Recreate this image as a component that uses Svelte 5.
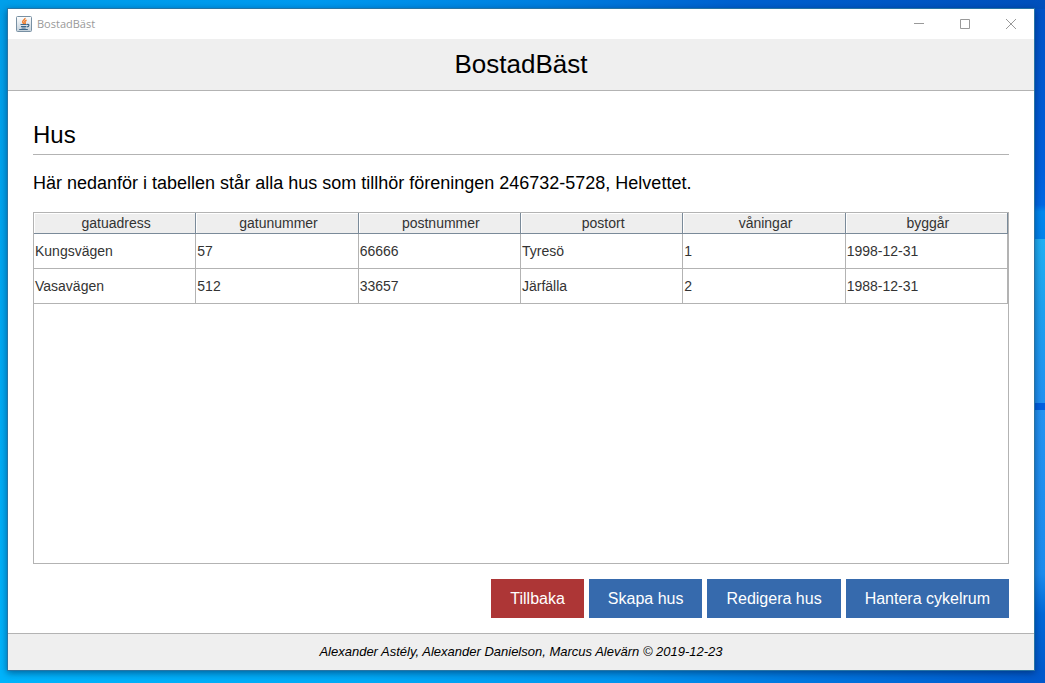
<script>
  const columns = ['gatuadress', 'gatunummer', 'postnummer', 'postort', 'våningar', 'byggår'];
  const houses = [
    ['Kungsvägen', '57', '66666', 'Tyresö', '1', '1998-12-31'],
    ['Vasavägen', '512', '33657', 'Järfälla', '2', '1988-12-31']
  ];
</script>

<div class="desktop">
  <div class="window">
    <div class="titlebar">
      <svg class="logo" viewBox="0 0 16 16" aria-hidden="true">
        <defs>
          <linearGradient id="tile" x1="0" y1="0" x2="0" y2="1">
            <stop offset="0" stop-color="#ffffff" />
            <stop offset="1" stop-color="#c3d0da" />
          </linearGradient>
        </defs>
        <rect x="0.5" y="0.5" width="15" height="15" rx="1" fill="url(#tile)" stroke="#7890a3" />
        <path d="M9 2c.5 1.600-2.900 2.400-2.300 4 .2.700.8 1.100 1.100 1.900M10.600 4.300c-1.900.7-2.300 1.400-1.500 2.300.5.600.2 1.100-.3 1.600" fill="none" stroke="#ef7d2c" stroke-width="1.500" />
        <path d="M4.500 8.500h6.200M5 10.500h5.200M5.500 12h4.200M3.200 13.500h8.600M11 8.500c2.800-.6 2.500 2-.3 2.500" fill="none" stroke="#3c6688" stroke-width="1.100" />
      </svg>
      <span class="caption">BostadBäst</span>
      <button class="control" aria-label="Minimera"><svg viewBox="0 0 10 10"><path d="M0 4.500h10" /></svg></button>
      <button class="control" aria-label="Maximera"><svg viewBox="0 0 10 10"><path d="M.5.5h9v9h-9z" /></svg></button>
      <button class="control" aria-label="Stäng"><svg viewBox="0 0 10 10"><path d="M0 0l10 10M10 0L0 10" /></svg></button>
    </div>
    <header><h1>BostadBäst</h1></header>
    <main>
      <h2>Hus</h2>
      <p>Här nedanför i tabellen står alla hus som tillhör föreningen 246732-5728, Helvettet.</p>
      <div class="pane">
        <table>
          <thead>
            <tr>{#each columns as column}<th scope="col">{column}</th>{/each}</tr>
          </thead>
          <tbody>
            {#each houses as house}
              <tr>{#each house as value}<td>{value}</td>{/each}</tr>
            {/each}
          </tbody>
        </table>
      </div>
      <div class="actions">
        <button class="action back">Tillbaka</button>
        <button class="action">Skapa hus</button>
        <button class="action">Redigera hus</button>
        <button class="action">Hantera cykelrum</button>
      </div>
    </main>
    <footer>Alexander Astély, Alexander Danielson, Marcus Alevärn © 2019-12-23</footer>
  </div>
</div>

<style>
  :global(body) {
    margin: 0;
  }
  .desktop {
    box-sizing: border-box;
    min-height: 100vh;
    padding: 8px 10px 12px 7px;
    display: flex;
    font-family: "Liberation Sans", Arial, sans-serif;
    color: #000;
    background:
      linear-gradient(90deg, #009fea 0%, #009af0 30%, #0080e0 52%, #0062d0 70%, #0050bc 100%) top / 100% 9px no-repeat,
      linear-gradient(90deg, #00b4fc 0%, #00aaf6 35%, #0094ee 60%, #0078e0 76%, #0058cc 100%) bottom / 100% 13px no-repeat,
      linear-gradient(180deg, #0052c6 0%, #0060dc 25%, #0068e4 30%, #0088ee 31%, #0084ec 35%, #20b0f4 35%, #1ea2f0 45%, #2192f2 59%, #0060e0 59%, #0060e0 60%, #2494f2 60%, #1c8cee 84%, #0068d8 90%, #0058cc 100%) right / 12px 100% no-repeat,
      linear-gradient(180deg, #009fea, #00b4fc);
  }
  .window {
    flex: 1;
    min-width: 0;
    display: flex;
    flex-direction: column;
    background: #fff;
    border: 1px solid #2874a4;
    box-shadow: 0 2px 7px rgba(0, 20, 60, 0.5);
  }
  .titlebar {
    height: 30px;
    display: flex;
    align-items: center;
    padding-left: 8px;
    box-sizing: border-box;
  }
  .logo {
    width: 16px;
    height: 16px;
    margin-right: 5px;
  }
  .caption {
    flex: 1;
    font: 11px/16px "Open Sans", "Noto Sans", sans-serif;
    color: #999;
  }
  .control {
    width: 46px;
    height: 30px;
    padding: 0;
    border: 0;
    background: none;
    display: grid;
    place-items: center;
  }
  .control svg {
    width: 10px;
    height: 10px;
    fill: none;
    stroke: #999;
  }
  header {
    background: #efefef;
    border-bottom: 1px solid #b3b3b3;
    text-align: center;
  }
  h1 {
    margin: 0;
    font-size: 26px;
    line-height: 51px;
    font-weight: 400;
  }
  main {
    flex: 1;
    display: flex;
    flex-direction: column;
    padding: 26px 25px 15px;
  }
  h2 {
    margin: 0 0 15px;
    padding-bottom: 2px;
    font-size: 24px;
    line-height: 35px;
    font-weight: 400;
    border-bottom: 1px solid #b3b3b3;
  }
  p {
    margin: 0 0 16px;
    font-size: 18px;
    line-height: 26px;
  }
  .pane {
    flex: 1;
    border: 1px solid #b3b3b3;
  }
  table {
    width: 100%;
    table-layout: fixed;
    border-collapse: separate;
    border-spacing: 0;
    font-size: 14px;
    color: #333;
  }
  th,
  td {
    box-sizing: border-box;
    font-weight: 400;
  }
  th {
    height: 21px;
    padding: 0 0 0 3px;
    line-height: 20px;
    background: #eee;
    border: solid #7a8a99;
    border-width: 0 1px 1px 0;
    box-shadow: inset 1px 1px #fff;
  }
  td {
    height: 35px;
    padding: 0 1px;
    line-height: 20px;
    border: solid #b3b3b3;
    border-width: 0 1px 1px 0;
  }
  .actions {
    display: flex;
    justify-content: flex-end;
    flex-wrap: wrap;
    gap: 5px;
    margin-top: 15px;
  }
  .action {
    height: 39px;
    padding: 0 19px;
    border: 0;
    font: 16px/20px "Liberation Sans", Arial, sans-serif;
    color: #fff;
    background: #366aad;
  }
  .back {
    background: #ad3636;
  }
  footer {
    background: #efefef;
    border-top: 1px solid #b3b3b3;
    text-align: center;
    font-size: 13px;
    line-height: 36px;
    font-style: italic;
  }
</style>
